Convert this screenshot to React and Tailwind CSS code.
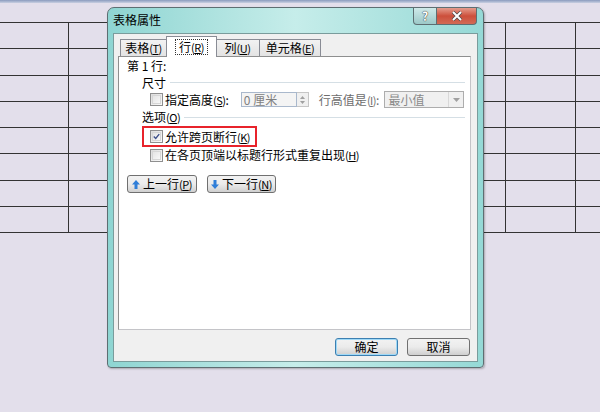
import React from 'react'

function Checkbox({ checked }) {
  return (
    <div className="w-[13px] h-[13px] border border-[#8f8f8f] bg-gradient-to-br from-[#dcdcdc] to-[#fbfbfb] p-[1px] shrink-0">
      <div className="w-full h-full border border-[#d6d6d6] bg-gradient-to-br from-[#e4e4e4] to-[#f8f8f8] flex items-center justify-center">
        {checked && (
          <svg width="9" height="9" viewBox="0 0 9 9">
            <path d="M1 4.5 L3.5 7 L8 1.5" fill="none" stroke="#3c4f8a" strokeWidth="1.8" />
          </svg>
        )}
      </div>
    </div>
  )
}

function Key({ k }) {
  return (
    <span className="text-[11px] tracking-[-0.5px]">
      (<span className="underline">{k}</span>)
    </span>
  )
}

function Btn({ children, w, focus }) {
  return (
    <div
      className={`${w} h-[18px] rounded-[3px] border ${focus ? 'border-[#3c7fb1] shadow-[inset_0_0_0_1px_#9fd9f7]' : 'border-[#707070]'} bg-gradient-to-b from-[#f2f2f2] via-[#ebebeb] to-[#cfcfcf] flex items-center justify-center gap-[3px] leading-none`}
    >
      {children}
    </div>
  )
}

export default function App() {
  const rows = Array.from({ length: 8 })
  return (
    <div className="relative w-[600px] h-[412px] overflow-hidden bg-[#e3dfeb] font-['Noto_Sans_CJK_SC',sans-serif] text-[12px] text-black">
      <div className="h-[3px] bg-gradient-to-b from-[#8a9bbd] to-[#c9d0e2]" />
      <div className="mt-[19px] border-t border-[#333]">
        {rows.map((_, i) => (
          <div key={i} className="grid grid-cols-[69px_437px_70px_1fr] h-[26.25px] border-b border-[#333]">
            <div className="border-r border-[#333]" />
            <div className="border-r border-[#333]" />
            <div className="border-r border-[#333]" />
            <div />
          </div>
        ))}
      </div>

      {/* dialog window */}
      <div className="absolute left-[107px] top-[7px] w-[377px] h-[361px] rounded-t-[7px] rounded-b-[4px] border border-[#5e6e72] bg-gradient-to-r from-[#8ed5d2] via-[#c6edea] to-[#95d9d6] shadow-[1px_1px_2px_rgba(0,0,0,0.25)]">
        <div className="flex h-[25px] items-start">
          <div className="pl-[5px] pt-[4px] leading-[16px]">表格属性</div>
          <div className="ml-auto mr-[6px] flex">
            <div className="w-[24px] h-[17px] border border-t-0 border-[#5e6e72] rounded-bl-[4px] bg-gradient-to-b from-[#cfe9e9] to-[#9cc9c8] flex items-center justify-center">
              <span className="text-[12px] font-bold leading-none text-white [text-shadow:0_0_1px_#333,0_0_1px_#333]">?</span>
            </div>
            <div className="w-[40px] h-[17px] border border-l-0 border-t-0 border-[#5e6e72] rounded-br-[4px] bg-gradient-to-b from-[#e49b8d] via-[#cc4f3b] to-[#d26a55] flex items-center justify-center">
              <svg width="12" height="10" viewBox="0 0 12 10">
                <path d="M2 1 L10 9 M10 1 L2 9" stroke="#4a4a4a" strokeWidth="3.4" />
                <path d="M2 1 L10 9 M10 1 L2 9" stroke="#fff" strokeWidth="2" />
              </svg>
            </div>
          </div>
        </div>

        {/* client area */}
        <div className="mx-[5px] h-[329px] border border-[#7a9c9c] bg-[#f0f0f0] flex flex-col">
          {/* tabs */}
          <div className="flex items-end h-[22px] pl-[7px] ml-[-1px]">
            <div className="w-[47px] h-[17px] border border-b-0 border-[#898c95] bg-gradient-to-b from-[#f2f2f2] to-[#e3e3e3] flex items-center justify-center leading-none">
              表格<Key k="T" />
            </div>
            <div className="w-[51px] h-[21px] -mx-[1px] border border-b-0 border-[#898c95] bg-white relative z-10 mb-[-1px] flex items-start justify-center pt-[2px]">
              <div className="px-[3px] border border-dotted border-[#333] leading-[14px]">
                行<Key k="R" />
              </div>
            </div>
            <div className="w-[44px] h-[17px] border border-b-0 border-l-0 border-[#898c95] bg-gradient-to-b from-[#f2f2f2] to-[#e3e3e3] flex items-center justify-center leading-none">
              列<Key k="U" />
            </div>
            <div className="w-[61px] h-[17px] border border-b-0 border-l-0 border-[#898c95] bg-gradient-to-b from-[#f2f2f2] to-[#e3e3e3] flex items-center justify-center leading-none">
              单元格<Key k="E" />
            </div>
          </div>

          {/* panel */}
          <div className="ml-[4px] w-[353px] h-[274px] border border-[#8e8f8f] border-b-[#c4c4c8] border-r-[#c4c4c8] bg-white flex flex-col">
            <div className="mt-[1px] ml-[8px] leading-[15px]">第 1 行:</div>
            <div className="mt-[2px] ml-[23px] flex items-center leading-[15px]">
              <span>尺寸</span>
              <div className="ml-[4px] mr-[5px] flex-1 h-px bg-[#d5dfe5]" />
            </div>
            <div className="mt-[1px] h-[17px] ml-[31px] flex items-center">
              <Checkbox />
              <span className="ml-[1px] pl-[1px] leading-none">指定高度<Key k="S" />:</span>
              <div className="ml-[12px] flex">
                <div className="w-[56px] h-[15px] border border-[#a9b8cc] bg-[#f4f4f4] text-[#808080] leading-[13px] pl-[2px]">0 厘米</div>
                <div className="w-[12px] h-[15px] border border-l-0 border-[#c6c6c6] bg-[#f0f0f0] flex flex-col items-center justify-center gap-[2px]">
                  <svg width="5" height="3" viewBox="0 0 5 3"><path d="M0 3 L2.5 0 L5 3Z" fill="#a0a0a0" /></svg>
                  <svg width="5" height="3" viewBox="0 0 5 3"><path d="M0 0 L2.5 3 L5 0Z" fill="#a0a0a0" /></svg>
                </div>
              </div>
              <span className="ml-[10px] text-[#6d6d6d] leading-none">行高值是<Key k="I" />:</span>
              <div className="ml-[5px] w-[80px] h-[17px] border border-[#adadad] bg-[#f0f0f0] flex items-center">
                <span className="flex-1 pl-[3px] text-[#8a8a8a] leading-none">最小值</span>
                <div className="w-[15px] h-[15px] border-l border-[#d8d8d8] flex items-center justify-center">
                  <svg width="7" height="4" viewBox="0 0 7 4"><path d="M0 0 L3.5 4 L7 0Z" fill="#a0a0a0" /></svg>
                </div>
              </div>
            </div>
            <div className="mt-[2px] ml-[23px] flex items-center leading-[14px]">
              <span>选项<Key k="O" /></span>
              <div className="ml-[4px] mr-[5px] flex-1 h-px bg-[#d5dfe5]" />
            </div>
            <div className="mt-[2px] ml-[23px] w-[115px] h-[21px] border-2 border-[#e8232b] flex items-center pl-[6px]">
              <Checkbox checked />
              <span className="ml-[2px] leading-none">允许跨页断行<Key k="K" /></span>
            </div>
            <div className="mt-[1px] ml-[31px] h-[14px] flex items-center">
              <Checkbox />
              <span className="ml-[2px] leading-none">在各页顶端以标题行形式重复出现<Key k="H" /></span>
            </div>
            <div className="mt-[13px] ml-[8px] flex gap-[10px]">
              <Btn w="w-[70px]">
                <svg width="8" height="9" viewBox="0 0 8 9"><path d="M4 0 L8 4.5 L5.5 4.5 L5.5 9 L2.5 9 L2.5 4.5 L0 4.5Z" fill="#2f7ed8" /></svg>
                <span>上一行<Key k="P" /></span>
              </Btn>
              <Btn w="w-[69px]">
                <svg width="8" height="9" viewBox="0 0 8 9"><path d="M4 9 L8 4.5 L5.5 4.5 L5.5 0 L2.5 0 L2.5 4.5 L0 4.5Z" fill="#2f7ed8" /></svg>
                <span>下一行<Key k="N" /></span>
              </Btn>
            </div>
          </div>

          <div className="mt-[8px] mr-[7px] flex justify-end gap-[9px]">
            <Btn w="w-[63px]" focus>确定</Btn>
            <Btn w="w-[63px]">取消</Btn>
          </div>
        </div>
      </div>
    </div>
  )
}
